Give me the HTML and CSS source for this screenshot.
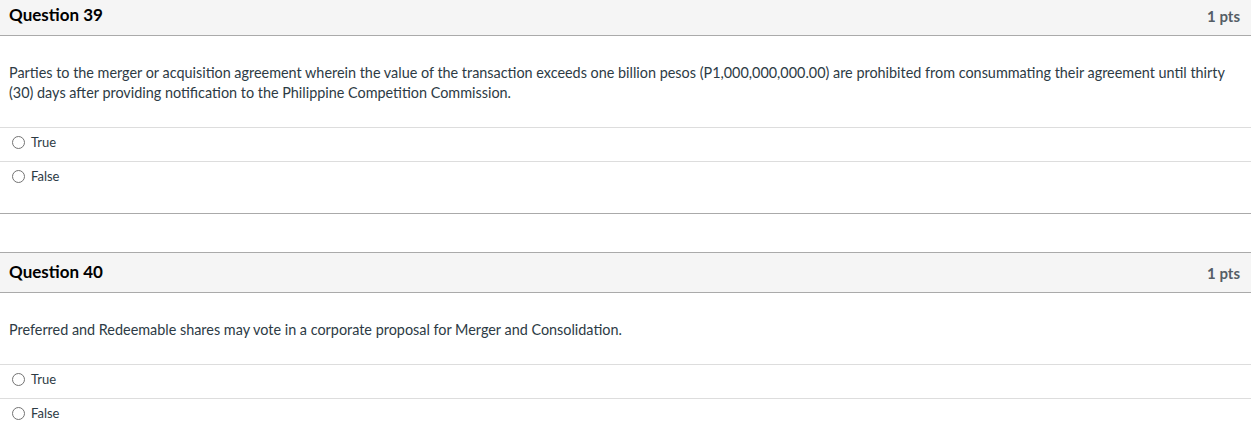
FILE: index.html
```html
<!DOCTYPE html>
<html>
<head>
<meta charset="utf-8">
<link rel="stylesheet" href="styles.css">
</head>
<body>
<div class="quiz">
  <div class="question">
    <div class="q-header">
      <h2 class="q-title">Question 39</h2>
      <span class="q-pts">1 pts</span>
    </div>
    <div class="q-body">
      <p class="q-text">Parties to the merger or acquisition agreement wherein the value of the transaction exceeds one billion pesos (P1,000,000,000.00) are prohibited from consummating their agreement until thirty (30) days after providing notification to the Philippine Competition Commission.</p>
      <div class="answers">
        <label class="answer"><span class="radio"></span><span class="a-label">True</span></label>
        <label class="answer"><span class="radio"></span><span class="a-label">False</span></label>
      </div>
    </div>
  </div>
  <div class="question">
    <div class="q-header">
      <h2 class="q-title">Question 40</h2>
      <span class="q-pts">1 pts</span>
    </div>
    <div class="q-body">
      <p class="q-text">Preferred and Redeemable shares may vote in a corporate proposal for Merger and Consolidation.</p>
      <div class="answers">
        <label class="answer"><span class="radio"></span><span class="a-label">True</span></label>
        <label class="answer"><span class="radio"></span><span class="a-label">False</span></label>
      </div>
    </div>
  </div>
</div>
</body>
</html>
```
FILE: styles.css
```css
html, body {
  margin: 0;
  padding: 0;
  background: #fff;
}
body {
  font-family: Lato, "Open Sans", sans-serif;
  color: #2d3b45;
  overflow: hidden;
}
.quiz {
  margin-top: -5px;
  display: flex;
  flex-direction: column;
  gap: 38px;
}
.question {
  border-top: 1px solid #aaaaaa;
  border-bottom: 1px solid #aaaaaa;
}
.q-header {
  display: flex;
  justify-content: space-between;
  align-items: center;
  height: 39px;
  padding: 0 11px 0 9px;
  background: #f5f5f5;
  border-bottom: 1px solid #aaaaaa;
}
.q-title {
  margin: 0 0 2px 0;
  font-size: 17px;
  font-weight: 700;
  color: #000;
}
.q-pts {
  font-size: 15px;
  font-weight: 700;
  color: #555e66;
}
.q-body {
  padding: 27px 0 18px 0;
}
.q-text {
  margin: 0 0 24px 0;
  padding: 0 9px;
  font-size: 14.4px;
  line-height: 20px;
}
.answers {
  display: flex;
  flex-direction: column;
}
.answer {
  display: flex;
  align-items: center;
  height: 33px;
  box-sizing: border-box;
  height: 34px;
  padding-bottom: 5px;
  border-top: 1px solid #dddddd;
  padding-left: 12px;
  font-size: 13px;
  color: #2d3b45;
}
.radio {
  width: 11px;
  height: 11px;
  border: 1px solid #737373;
  border-radius: 50%;
  margin-right: 6px;
  box-sizing: content-box;
}
.a-label {
  line-height: 16px;
}
```
